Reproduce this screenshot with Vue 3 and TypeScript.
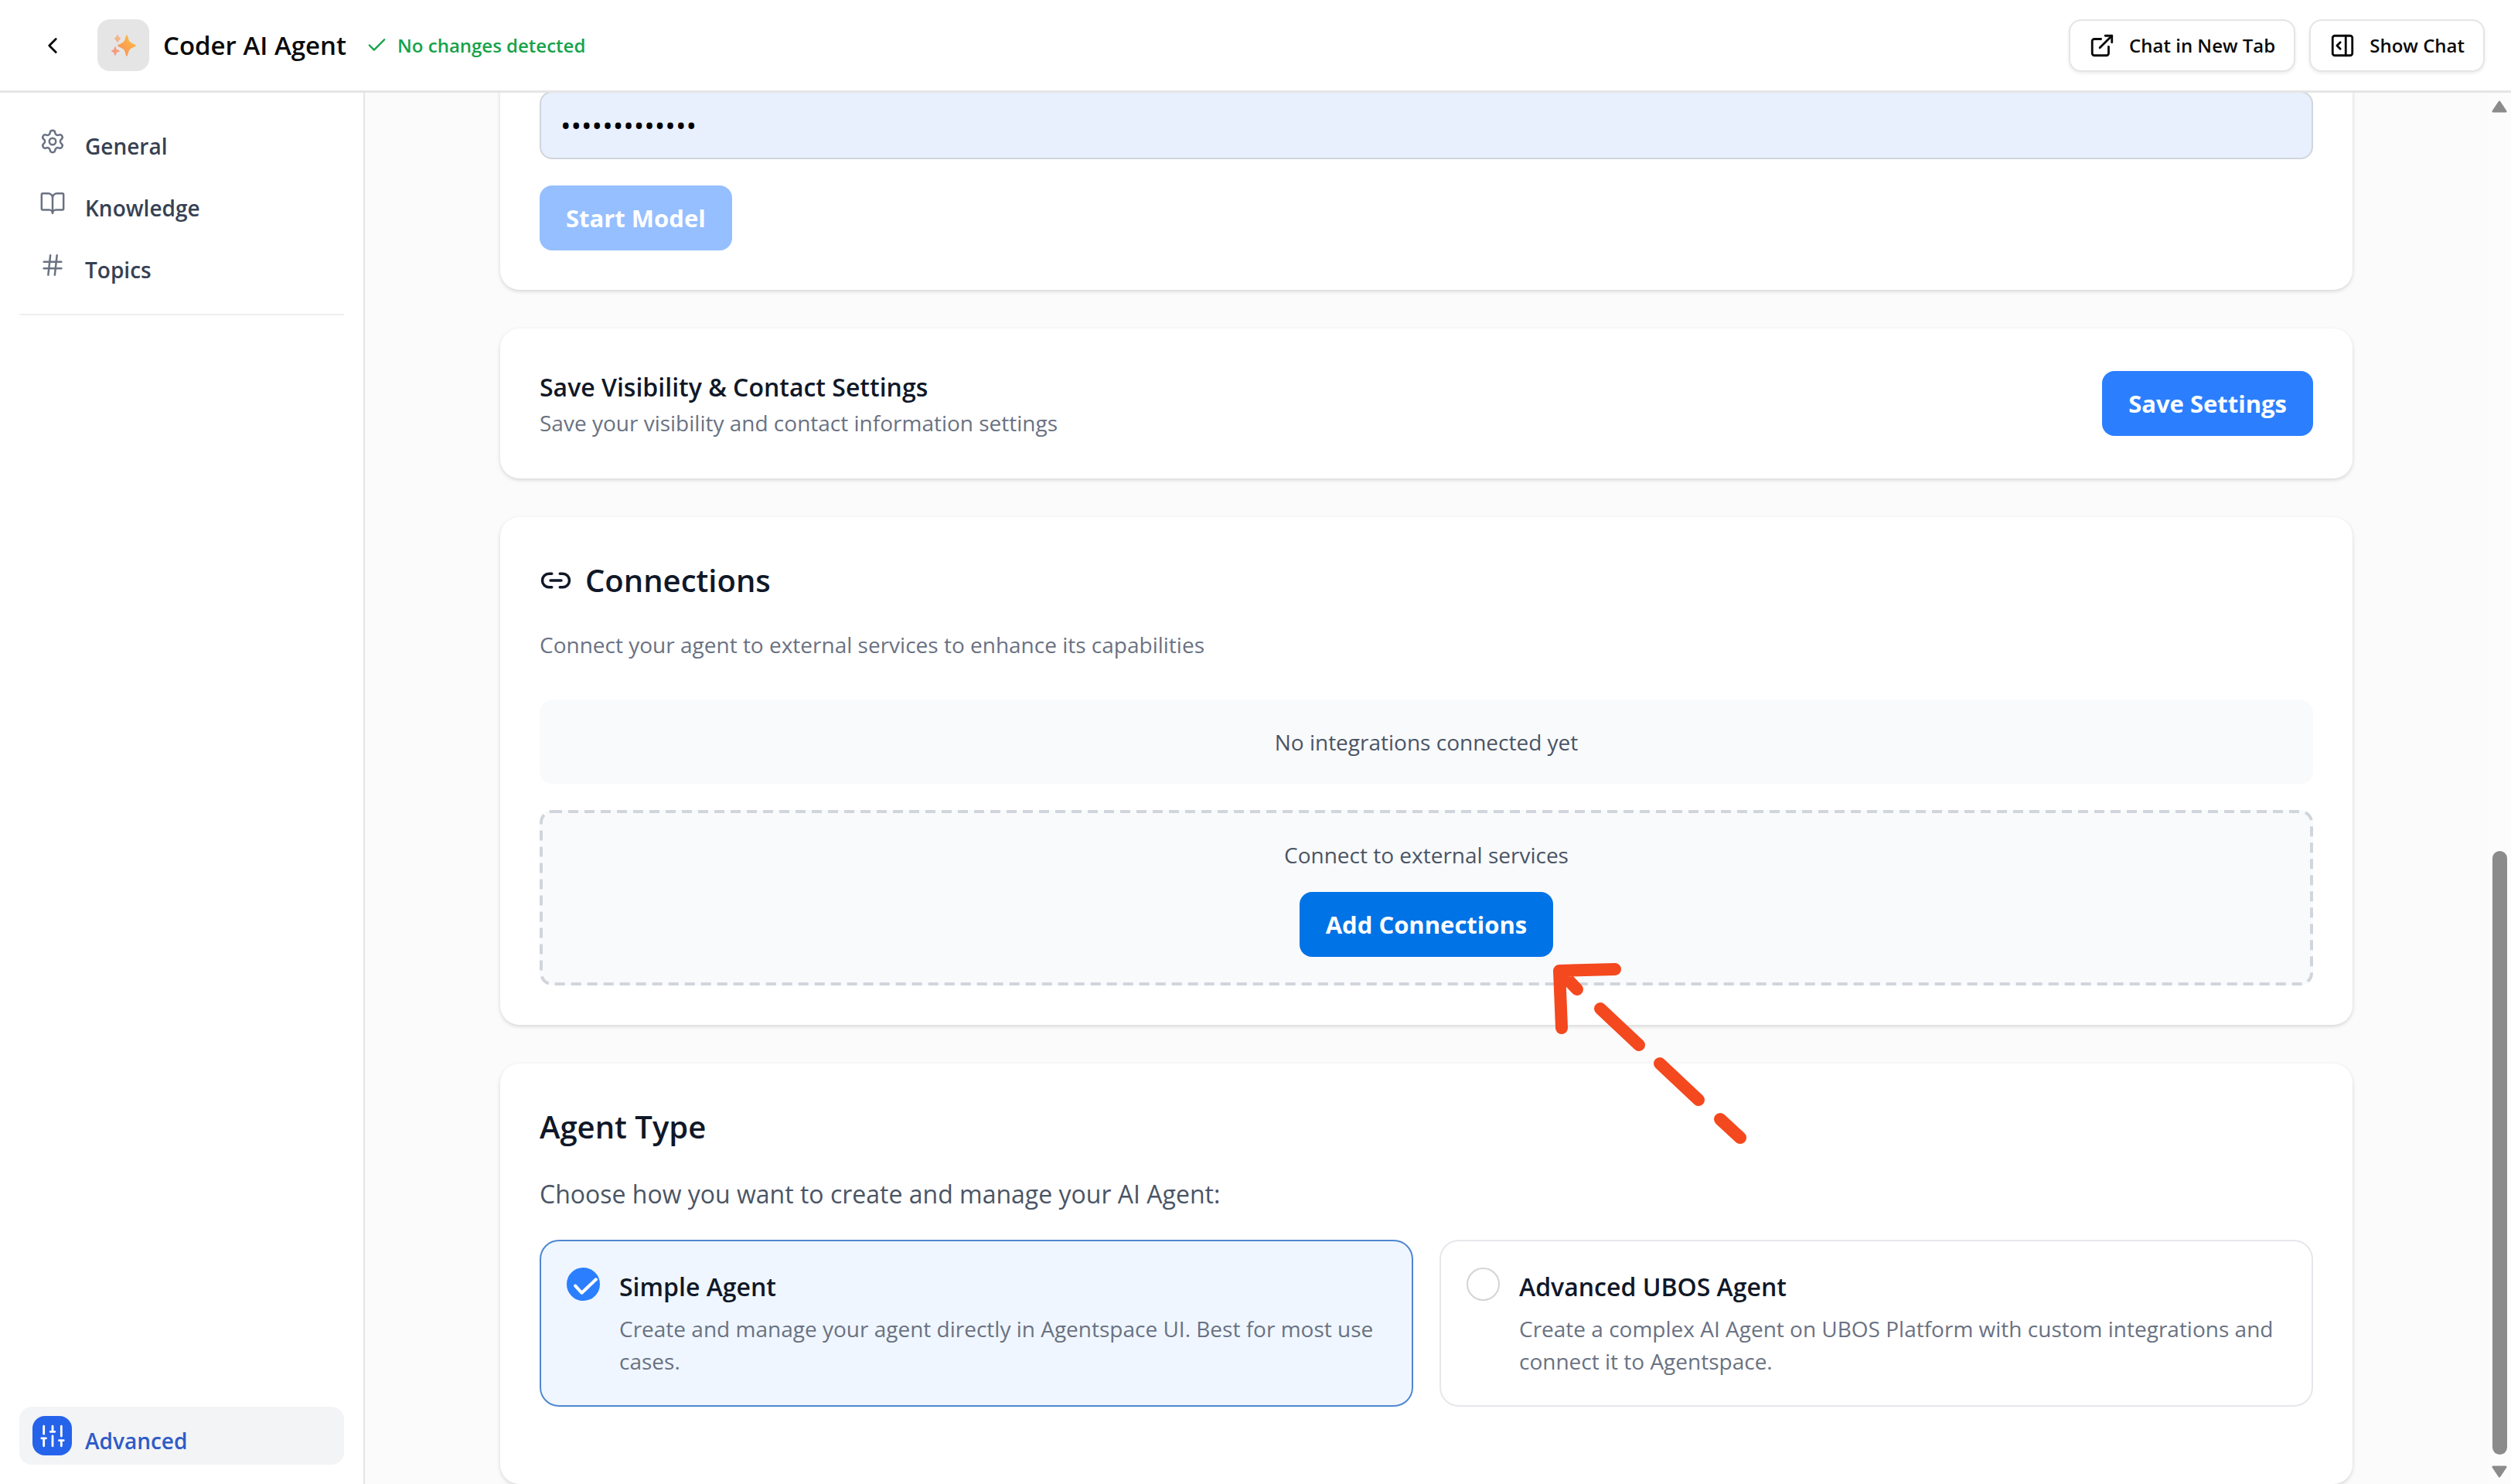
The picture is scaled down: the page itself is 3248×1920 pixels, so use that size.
<script setup lang="ts">
import { ref } from 'vue'

interface NavItem {
  label: string
  paths: string[]
}

interface AgentOption {
  id: string
  title: string
  text: string
}

const navItems: NavItem[] = [
  {
    label: 'General',
    paths: [
      'M9.671 4.136a2.34 2.34 0 0 1 4.659 0 2.34 2.34 0 0 0 3.319 1.915 2.34 2.34 0 0 1 2.33 4.033 2.34 2.34 0 0 0 0 3.831 2.34 2.34 0 0 1-2.33 4.033 2.34 2.34 0 0 0-3.319 1.915 2.34 2.34 0 0 1-4.659 0 2.34 2.34 0 0 0-3.32-1.915 2.34 2.34 0 0 1-2.33-4.033 2.34 2.34 0 0 0 0-3.831A2.34 2.34 0 0 1 6.35 6.051a2.34 2.34 0 0 0 3.319-1.915',
      'M15 12a3 3 0 1 1-6 0 3 3 0 0 1 6 0z',
    ],
  },
  {
    label: 'Knowledge',
    paths: [
      'M12 7v14',
      'M3 18a1 1 0 0 1-1-1V4a1 1 0 0 1 1-1h5a4 4 0 0 1 4 4 4 4 0 0 1 4-4h5a1 1 0 0 1 1 1v13a1 1 0 0 1-1 1h-6a3 3 0 0 0-3 3 3 3 0 0 0-3-3z',
    ],
  },
  { label: 'Topics', paths: ['M4 9h16', 'M4 15h16', 'M10 3 8 21', 'M16 3l-2 18'] },
]

const options: AgentOption[] = [
  {
    id: 'simple',
    title: 'Simple Agent',
    text: 'Create and manage your agent directly in Agentspace UI. Best for most use cases.',
  },
  {
    id: 'ubos',
    title: 'Advanced UBOS Agent',
    text: 'Create a complex AI Agent on UBOS Platform with custom integrations and connect it to Agentspace.',
  },
]

const agentType = ref('simple')
const apiKey = ref('agentspacekey')
</script>

<template>
  <div class="app">
    <header class="topbar">
      <button class="back" type="button" aria-label="Back">
        <svg class="icon" viewBox="0 0 24 24"><path d="m15 18-6-6 6-6" /></svg>
      </button>
      <div class="avatar">
        <svg viewBox="0 0 67 67" aria-hidden="true">
          <defs>
            <linearGradient id="spark" x1="0" y1="1" x2="1" y2="0">
              <stop offset="0" stop-color="#f98a5c" />
              <stop offset="1" stop-color="#fdc23e" />
            </linearGradient>
          </defs>
          <g fill="url(#spark)">
            <path d="M38 20c1 0 2 7 4 9s8 4 8 5-6 3-8 5-3 9-4 9-2-7-4-9-8-4-8-5 6-3 8-5 3-9 4-9z" />
            <path d="M23 35c1 0 1 3 2 4s4 1 4 2-3 1-4 2-1 4-2 4-1-3-2-4-3-1-3-2 2-1 3-2 1-4 2-4z" fill="#f79a80" />
            <path d="M26 20c1 0 1 2 2 3s2 1 2 2-1 1-2 2-1 3-2 3-1-2-2-3-2-1-2-2 1-1 2-2 1-3 2-3z" fill="#f4b48c" />
          </g>
        </svg>
      </div>
      <h1 class="title">Coder AI Agent</h1>
      <p class="status">
        <svg class="icon" viewBox="0 0 24 24"><path d="M20 6 9 17l-5-5" /></svg>
        <span>No changes detected</span>
      </p>
      <div class="actions">
        <button class="ghost" type="button">
          <svg class="icon" viewBox="0 0 24 24">
            <path d="M15 3h6v6" /><path d="M10 14 21 3" />
            <path d="M18 13v6a2 2 0 0 1-2 2H5a2 2 0 0 1-2-2V8a2 2 0 0 1 2-2h6" />
          </svg>
          <span>Chat in New Tab</span>
        </button>
        <button class="ghost" type="button">
          <svg class="icon" viewBox="0 0 24 24">
            <rect x="3" y="3" width="18" height="18" rx="2" />
            <path d="M15 3v18" /><path d="m10 15-3-3 3-3" />
          </svg>
          <span>Show Chat</span>
        </button>
      </div>
    </header>

    <div class="body">
      <nav class="sidebar">
        <div class="nav-group">
          <a v-for="item in navItems" :key="item.label" class="nav-item" href="#">
            <span class="nav-icon">
              <svg class="icon thin" viewBox="0 0 24 24">
                <path v-for="d in item.paths" :key="d" :d="d" />
              </svg>
            </span>
            <span class="nav-label">{{ item.label }}</span>
          </a>
        </div>
        <hr class="rule" />
        <a class="nav-item active" href="#">
          <span class="nav-icon">
            <svg class="icon" viewBox="0 0 24 24">
              <path d="M4 21v-7M4 10V3M12 21v-9M12 8V3M20 21v-5M20 12V3M2 14h4M10 8h4M18 16h4" />
            </svg>
          </span>
          <span class="nav-label">Advanced</span>
        </a>
      </nav>

      <main class="content">
        <section class="card model">
          <input v-model="apiKey" class="secret" type="password" aria-label="API key" />
          <button class="btn" type="button" disabled>Start Model</button>
        </section>

        <section class="card save">
          <div>
            <h3 class="subhead">Save Visibility &amp; Contact Settings</h3>
            <p class="small">Save your visibility and contact information settings</p>
          </div>
          <button class="btn" type="button">Save Settings</button>
        </section>

        <section class="card">
          <h2 class="heading">
            <svg class="icon" viewBox="0 0 24 24">
              <path d="M9 17H7A5 5 0 0 1 7 7h2" /><path d="M15 7h2a5 5 0 1 1 0 10h-2" /><path d="M8 12h8" />
            </svg>
            <span>Connections</span>
          </h2>
          <p class="small">Connect your agent to external services to enhance its capabilities</p>
          <p class="empty">No integrations connected yet</p>
          <div class="dropzone">
            <svg class="dashes" aria-hidden="true"><rect x="2" y="2" rx="14" /></svg>
            <p>Connect to external services</p>
            <div class="pointed">
              <button class="btn primary" type="button">Add Connections</button>
              <svg class="arrow" viewBox="0 0 252 246" aria-hidden="true">
                <path d="M80 16 8 18l3 74M8 18l23 24M61 67l50 47M138 138l50 47M216 210l26 24" />
              </svg>
            </div>
          </div>
        </section>

        <section class="card agent-type">
          <h2 class="heading">Agent Type</h2>
          <p class="lead">Choose how you want to create and manage your AI Agent:</p>
          <div class="options">
            <label
              v-for="option in options"
              :key="option.id"
              class="option"
              :class="{ selected: agentType === option.id }"
            >
              <span class="radio">
                <input v-model="agentType" type="radio" name="agent-type" :value="option.id" />
                <svg v-if="agentType === option.id" class="icon" viewBox="0 0 42 42">
                  <path d="m11 23 8 9 18-17" />
                </svg>
              </span>
              <span class="option-body">
                <span class="subhead">{{ option.title }}</span>
                <span class="small">{{ option.text }}</span>
              </span>
            </label>
          </div>
        </section>
      </main>

      <div class="scrollbar" aria-hidden="true">
        <svg viewBox="0 0 20 16"><path d="M10 2 18 14H2z" /></svg>
        <div class="track"><div class="thumb"></div></div>
        <svg viewBox="0 0 20 16"><path d="M10 14 2 2h16z" /></svg>
      </div>
    </div>
  </div>
</template>

<style>
body {
  margin: 0;
}
</style>

<style scoped>
.app {
  display: flex;
  flex-direction: column;
  height: 100vh;
  overflow: hidden;
  background: #fff;
  color: #101828;
  font-family: 'Open Sans', 'Noto Sans', sans-serif;
  font-size: 28px;
  line-height: 42px;
}

.app *,
.app *::before {
  box-sizing: border-box;
}

h1,
h2,
h3,
p {
  margin: 0;
}

button,
input {
  font-family: inherit;
}

a {
  color: inherit;
  text-decoration: none;
}

.icon {
  flex: none;
  width: 34px;
  height: 34px;
  fill: none;
  stroke: currentColor;
  stroke-width: 2;
  stroke-linecap: round;
  stroke-linejoin: round;
}

.icon.thin {
  stroke-width: 1.75;
}

/* Top bar */
.topbar {
  display: flex;
  flex: none;
  align-items: center;
  height: 120px;
  padding: 0 34px;
  border-bottom: 3px solid #e5e5e5;
  color: #0a0a0a;
}

.back {
  display: grid;
  place-items: center;
  width: 67px;
  height: 67px;
  margin-right: 25px;
  padding: 0;
  border: 0;
  background: none;
  color: inherit;
}

.avatar {
  width: 67px;
  height: 67px;
  margin-right: 18px;
  border-radius: 16px;
  background: #e5e5e5;
}

.avatar svg {
  display: block;
}

.title {
  font-size: 33px;
  font-weight: 600;
  line-height: 42px;
}

.status {
  display: flex;
  align-items: center;
  gap: 12px;
  margin-left: 25px;
  color: #16a34a;
  font-size: 24px;
  font-weight: 600;
}

.status .icon {
  width: 29px;
  height: 29px;
}

.actions {
  display: flex;
  gap: 18px;
  margin-left: auto;
}

.ghost {
  display: flex;
  align-items: center;
  gap: 18px;
  height: 68px;
  padding: 0 24px;
  border: 2px solid #e5e5e5;
  border-radius: 16px;
  background: #fff;
  box-shadow: 0 2px 4px rgba(0, 0, 0, 0.08);
  color: #0a0a0a;
  font-size: 24px;
  font-weight: 600;
}

/* Layout below the bar */
.body {
  display: flex;
  flex: 1;
  min-height: 0;
}

.sidebar {
  display: flex;
  flex: none;
  flex-direction: column;
  width: 472px;
  padding: 25px;
  border-right: 2px solid #e5e5e5;
}

.nav-group {
  display: flex;
  flex-direction: column;
  gap: 5px;
}

.nav-item {
  display: flex;
  align-items: center;
  gap: 17px;
  height: 75px;
  padding: 0 17px;
  border-radius: 16px;
  color: #364153;
  font-weight: 600;
}

.nav-icon {
  display: grid;
  place-items: center;
  width: 51px;
  height: 51px;
  border-radius: 16px;
  color: #6a7282;
}

.nav-label {
  padding-top: 12px;
}

.rule {
  width: 100%;
  height: 2px;
  margin: 26px 0 0;
  border: 0;
  background: #eeeff1;
}

.active {
  margin-top: auto;
  background: #f3f4f6;
  color: #2f5bc7;
}

.active .nav-icon {
  background: #2563eb;
  color: #fff;
}

.content {
  display: flex;
  flex: 1;
  flex-direction: column;
  justify-content: flex-end;
  gap: 50px;
  min-width: 0;
  padding: 0 175px;
  overflow: hidden;
  background: #fbfbfb;
}

.card {
  flex: none;
  padding: 51px;
  border-radius: 25px;
  background: #fff;
  box-shadow: 0 2px 6px rgba(0, 0, 0, 0.08), 0 2px 4px rgba(0, 0, 0, 0.08);
}

.heading {
  display: flex;
  align-items: center;
  gap: 17px;
  margin-bottom: 31px;
  font-size: 40px;
  font-weight: 600;
  line-height: 62px;
}

.heading .icon {
  width: 42px;
  height: 42px;
}

.subhead {
  display: block;
  font-size: 32px;
  font-weight: 600;
  line-height: 50px;
}

.small {
  display: block;
  color: #6a7282;
}

.btn {
  height: 84px;
  padding: 0 34px;
  border: 0;
  border-radius: 16px;
  background: #2b7fff;
  color: #fff;
  font-size: 31px;
  font-weight: 700;
}

.btn:disabled {
  background: #95bfff;
}

.btn.primary {
  background: #0073e6;
}

.model {
  display: flex;
  flex-direction: column;
  align-items: flex-start;
  gap: 34px;
}

.secret {
  width: 100%;
  height: 88px;
  padding: 0 25px;
  border: 2px solid #d1d5dc;
  border-radius: 16px;
  background: #e8f0fe;
  color: #000;
  font-size: 36px;
}

.save {
  display: flex;
  align-items: center;
  justify-content: space-between;
}

.empty {
  margin-top: 51px;
  padding: 33px;
  border-radius: 16px;
  background: #f9fafb;
  color: #4a5565;
  text-align: center;
}

.dropzone {
  position: relative;
  display: flex;
  flex-direction: column;
  align-items: center;
  gap: 27px;
  margin-top: 34px;
  padding: 37px;
  border-radius: 16px;
  background: #f9fafb;
  color: #4a5565;
}

.dashes {
  position: absolute;
  inset: 0;
  width: 100%;
  height: 100%;
}

.dashes rect {
  width: calc(100% - 4px);
  height: calc(100% - 4px);
  fill: none;
  stroke: #d1d5dc;
  stroke-width: 4;
  stroke-dasharray: 13 8;
}

.pointed {
  position: relative;
}

.pointed .btn {
  display: block;
}

.arrow {
  position: absolute;
  top: 100%;
  left: 100%;
  z-index: 1;
  width: 252px;
  height: 246px;
  fill: none;
  stroke: #f4481e;
  stroke-width: 16;
  stroke-linecap: round;
  stroke-linejoin: round;
}

.agent-type {
  padding-bottom: 100px;
}

.lead {
  margin-bottom: 34px;
  color: #4a5565;
  font-size: 32px;
  line-height: 50px;
}

.options {
  display: grid;
  grid-template-columns: 1fr 1fr;
  gap: 34px;
}

.option {
  display: flex;
  gap: 25px;
  padding: 34px 33px 36px;
  border: 2px solid #e5e7eb;
  border-radius: 25px;
}

.option.selected {
  border-color: #4f87d0;
  background: #eff6ff;
}

.option-body {
  display: flex;
  flex-direction: column;
  gap: 8px;
}

.radio {
  display: grid;
  flex: none;
  width: 43px;
  height: 43px;
}

.radio input,
.radio .icon {
  grid-area: 1 / 1;
  width: 100%;
  height: 100%;
  margin: 0;
}

.radio input {
  appearance: none;
  border: 2px solid #d4d4d8;
  border-radius: 50%;
  background: #fff;
}

.radio input:checked {
  border-color: #2b7fff;
  background: #2b7fff;
}

.radio .icon {
  stroke: #fff;
  stroke-width: 4;
  pointer-events: none;
}

.scrollbar {
  display: flex;
  flex: none;
  flex-direction: column;
  align-items: center;
  width: 30px;
  padding: 10px 0 8px;
  background: #fcfcfc;
}

.scrollbar svg {
  width: 20px;
  height: 16px;
  fill: #8b8b8b;
  stroke: #8b8b8b;
  stroke-width: 3;
  stroke-linejoin: round;
}

.track {
  display: flex;
  flex: 1;
  flex-direction: column;
  justify-content: flex-end;
  padding-bottom: 14px;
}

.thumb {
  width: 19px;
  height: 45%;
  border-radius: 10px;
  background: #8b8b8b;
}
</style>
